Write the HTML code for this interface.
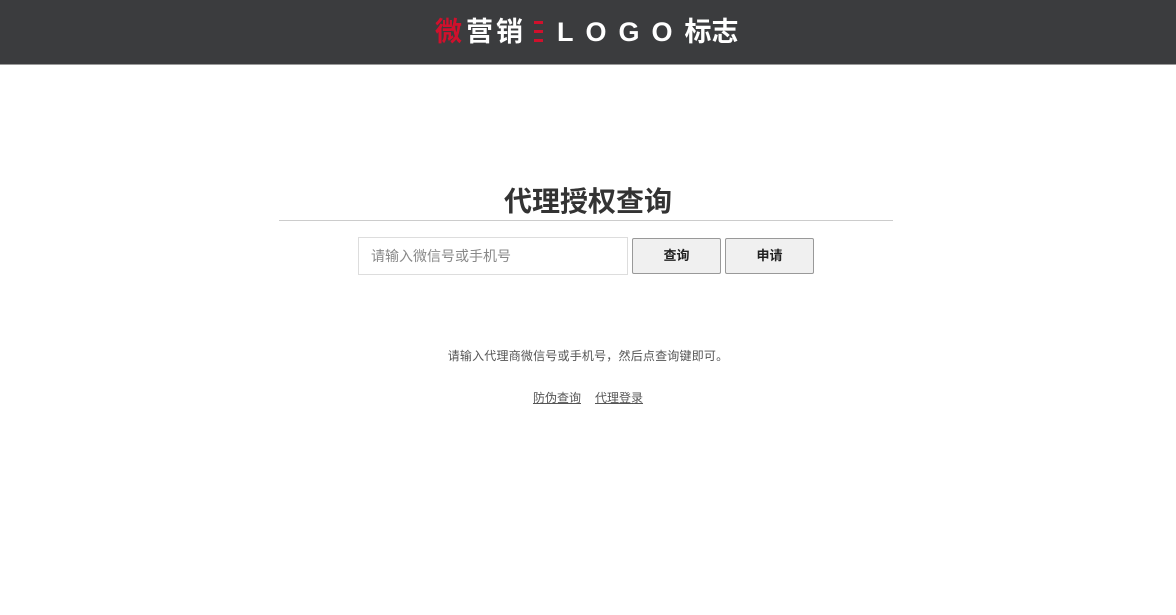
<!DOCTYPE html>
<html><head><meta charset="utf-8"><style>
*{margin:0;padding:0;box-sizing:border-box}
body{width:1176px;height:615px;background:#fff;font-family:"Liberation Sans","Noto Sans CJK SC",sans-serif;position:relative;overflow:hidden}
.hd{position:absolute;left:0;top:0;width:1176px;height:65px;background:#3b3c3e;border-bottom:1px solid #9a9a9a}
.logo{position:absolute;left:435px;top:15px;height:34px;line-height:34px;font-size:27px;font-weight:bold;color:#fff;white-space:nowrap}
.logo .r{color:#d0102c;margin-right:4px}
.logo .c{letter-spacing:3px}
.bar{display:inline-block;width:9px;height:22px;vertical-align:-2px;margin:0 14px 0 8px;background:repeating-linear-gradient(#d0102c 0 3px,transparent 3px 9px)}
.lg{letter-spacing:12px;font-size:27px}
.t{position:absolute;left:0;width:1176px;top:180px;text-align:center;font-size:28px;font-weight:bold;color:#333}
.ln{position:absolute;left:279px;top:220px;width:614px;height:1px;background:#ccc}
.in{position:absolute;left:358px;top:237px;width:270px;height:38px;border:1px solid #ddd;font-size:14px;color:#888;padding:0 12px;line-height:36px}
.b{position:absolute;top:238px;width:89px;height:36px;border:1px solid #999;border-radius:2px;background:#f0f0f0;font-size:13px;font-weight:bold;color:#222;text-align:center;line-height:34px}
.tip{position:absolute;left:0;width:1176px;top:347px;text-align:center;font-size:12px;color:#555;letter-spacing:0.2px}
.lk{position:absolute;left:0;width:1176px;top:389px;text-align:center;font-size:12px;color:#555}
.lk span{text-decoration:underline;margin:0 7px}
</style></head><body>
<div class="hd"><div class="logo"><span class="r">微</span><span class="c">营销</span><span class="bar"></span><span class="lg">LOGO</span>标志</div></div>
<div class="t">代理授权查询</div>
<div class="ln"></div>
<div class="in">请输入微信号或手机号</div>
<div class="b" style="left:632px">查询</div>
<div class="b" style="left:725px">申请</div>
<div class="tip">请输入代理商微信号或手机号，然后点查询键即可。</div>
<div class="lk"><span>防伪查询</span><span>代理登录</span></div>
</body></html>
